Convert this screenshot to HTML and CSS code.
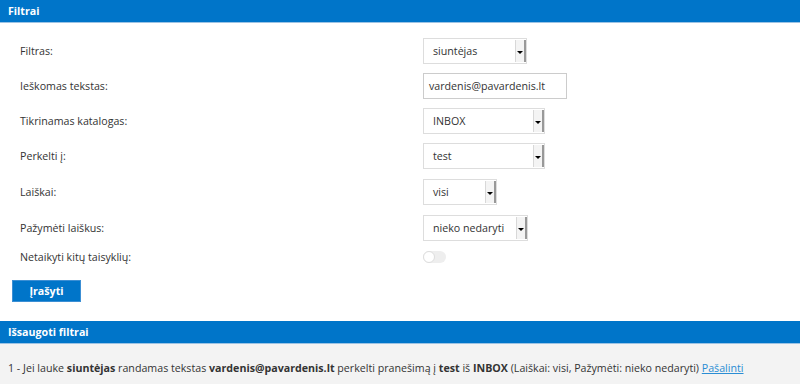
FILE: index.html
```html
<!DOCTYPE html>
<html lang="lt">
<head>
<meta charset="utf-8">
<title>Filtrai</title>
<link rel="stylesheet" href="styles.css">
</head>
<body>
<div class="page">
  <div class="panel-head">Filtrai</div>
  <form class="form">
    <div class="row"><label>Filtras:</label><div class="sel w104"><span>siuntėjas</span><i></i></div></div>
    <div class="row"><label>Ieškomas tekstas:</label><div class="inp">vardenis@pavardenis.lt</div></div>
    <div class="row"><label>Tikrinamas katalogas:</label><div class="sel w122"><span>INBOX</span><i></i></div></div>
    <div class="row tall"><label>Perkelti į:</label><div class="sel w122"><span>test</span><i></i></div></div>
    <div class="row tall"><label>Laiškai:</label><div class="sel w74"><span>visi</span><i></i></div></div>
    <div class="row"><label>Pažymėti laiškus:</label><div class="sel w105"><span>nieko nedaryti</span><i></i></div></div>
    <div class="row short"><label>Netaikyti kitų taisyklių:</label><div class="toggle"><b></b></div></div>
    <div class="actions"><button type="button" class="btn">Įrašyti</button></div>
  </form>
  <div class="panel-head">Išsaugoti filtrai</div>
  <div class="saved">1 - Jei lauke <b>siuntėjas</b> randamas tekstas <b>vardenis@pavardenis.lt</b> perkelti pranešimą į <b>test</b> iš <b>INBOX</b> (Laiškai: visi, Pažymėti: nieko nedaryti) <a href="#">Pašalinti</a></div>
</div>
</body>
</html>
```
FILE: styles.css
```css
html, body { margin: 0; padding: 0; background: #fff; }
body { font-family: "Open Sans", "Noto Sans", sans-serif; font-size: 10.67px; color: #333; }
.page { width: 800px; }
.panel-head {
  background: #0075c9;
  color: #fff;
  font-weight: bold;
  height: 22px;
  line-height: 22px;
  padding-left: 8px;
  border-bottom: 1px solid #9cc3e4;
}
.form { padding: 10px 0 19px 20px; }
.row { display: flex; align-items: center; height: 35px; }
.row.tall { height: 36px; }
.row.short { height: 24px; }
.row label { width: 403px; }
.sel {
  box-sizing: border-box;
  height: 26px;
  border: 1px solid #ddd;
  display: flex;
  align-items: stretch;
  background: #fff;
}
.sel span { flex: 1; padding-left: 9px; line-height: 24px; }
.sel i {
  width: 8px;
  margin: 1px 0;
  background: #f4f4f4;
  border-left: 1px solid #d8d8d8;
  border-right: 2px solid #999;
  position: relative;
}
.sel i::after {
  content: "";
  position: absolute;
  left: 1px; top: 11px;
  border-left: 3px solid transparent;
  border-right: 3px solid transparent;
  border-top: 3px solid #000;
}
.w104 { width: 104px; }
.w122 { width: 122px; }
.w74 { width: 74px; }
.w105 { width: 105px; }
.inp {
  box-sizing: border-box;
  width: 144px; height: 26px;
  border: 1px solid #ccc;
  padding-left: 5px;
  line-height: 24px;
}
.toggle {
  width: 23px; height: 12px;
  border-radius: 6px;
  background: #eee;
  position: relative;
}
.toggle b {
  position: absolute; left: 0; top: 0;
  box-sizing: border-box;
  width: 12px; height: 12px; border-radius: 50%;
  background: #fff; border: 1px solid #ddd;
}
.actions { padding-top: 11px; margin-left: -8px; }
.btn {
  display: block;
  background: #0075c9;
  color: #fff;
  border: 1px solid #3c8fd4;
  font-family: inherit;
  font-size: 10.67px;
  font-weight: bold;
  width: 69px; height: 22px;
  padding: 0;
}
.saved {
  background: #f3f3f3;
  padding: 17px 8px 9px;
  height: 15px;
  line-height: 15px;
}
.saved a { color: #2a8dd4; }
```
